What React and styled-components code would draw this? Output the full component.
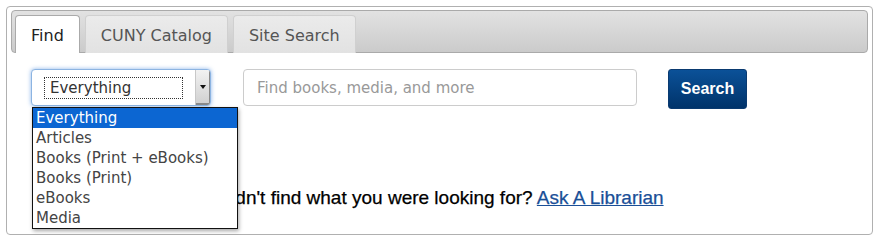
import React from 'react'
import styled, { createGlobalStyle } from 'styled-components'

const GlobalStyle = createGlobalStyle`
  body {
    margin: 0;
    background: #ffffff;
    font-family: "DejaVu Sans", Verdana, sans-serif;
  }
`

const Page = styled.div`
  padding: 6px 12px 0 6px;
`

const Panel = styled.div`
  position: relative;
  height: 229px;
  box-sizing: border-box;
  border: 1px solid #b0b0b0;
  border-radius: 4px;
  padding: 3px 4px 0 4px;
`

const TabBar = styled.div`
  display: flex;
  gap: 5px;
  height: 43px;
  box-sizing: border-box;
  padding: 4px 3px 0 3px;
  border: 1px solid #aaaaaa;
  border-radius: 4px;
  background: linear-gradient(#e2e2e2, #cbcbcb);
`

const Tab = styled.div`
  display: flex;
  align-items: center;
  height: 38px;
  box-sizing: border-box;
  padding: 2px 15px 0 15px;
  border: 1px solid ${p => (p.$active ? '#aaaaaa' : '#d0d0d0')};
  border-bottom: none;
  border-radius: 4px 4px 0 0;
  background: ${p => (p.$active ? '#ffffff' : 'linear-gradient(#ebebeb, #e2e2e2)')};
  color: ${p => (p.$active ? '#222222' : '#555555')};
  font-size: 16px;
`

const Content = styled.div`
  padding: 16px 0 0 20px;
`

const SearchRow = styled.div`
  display: flex;
  align-items: flex-start;
`

const SelectBox = styled.div`
  display: flex;
  width: 180px;
  height: 37px;
  box-sizing: border-box;
  border: 1px solid #8cb4e2;
  border-radius: 4px;
  box-shadow: 0 0 4px rgba(90, 150, 225, 0.7);
  background: #ffffff;
  overflow: hidden;
`

const SelectValue = styled.div`
  flex: 1;
  display: flex;
  align-items: center;
  padding-left: 12px;
`

const FocusRing = styled.span`
  display: inline-block;
  width: 139px;
  box-sizing: border-box;
  padding: 1px 4px 0 5px;
  border: 1px dotted #333333;
  font-size: 15px;
  color: #333333;
  line-height: 19px;
`

const ArrowButton = styled.div`
  width: 14px;
  display: flex;
  align-items: center;
  justify-content: center;
  background: linear-gradient(#f2f2f2, #cfcfcf);
  border-left: 1px solid #c8c8c8;
  box-shadow: inset -1px -2px 0 #8a8a8a;
`

const Arrow = styled.span`
  width: 0;
  height: 0;
  border-left: 3px solid transparent;
  border-right: 3px solid transparent;
  border-top: 4px solid #111111;
  margin-top: -1px;
`

const TextInput = styled.input`
  width: 394px;
  height: 37px;
  box-sizing: border-box;
  margin-left: 32px;
  padding: 0 13px;
  border: 1px solid #cccccc;
  border-radius: 4px;
  font-family: "DejaVu Sans", Verdana, sans-serif;
  font-size: 15px;
  color: #333333;
  outline: none;

  &::placeholder {
    color: #999999;
  }
`

const SearchButton = styled.button`
  width: 79px;
  height: 40px;
  margin-left: 31px;
  border: 1px solid #0a3a70;
  border-radius: 3px;
  background: linear-gradient(#0b5198, #00336a);
  color: #ffffff;
  font-family: "Liberation Sans", Arial, sans-serif;
  font-weight: bold;
  font-size: 16px;
  padding: 0;
`

const HelpLine = styled.p`
  margin: 78px 0 0 -18px;
  text-align: center;
  font-family: "Liberation Sans", Arial, sans-serif;
  font-size: 19px;
  line-height: 22px;
  color: #000000;
  -webkit-text-stroke: 0.25px #000000;
`

const HelpLink = styled.a`
  color: #1a4f97;
  text-decoration: underline;
  -webkit-text-stroke: 0.25px #1a4f97;
`

const Dropdown = styled.ul`
  position: absolute;
  left: 25px;
  top: 100px;
  width: 206px;
  box-sizing: border-box;
  margin: 0;
  padding: 0;
  list-style: none;
  background: #ffffff;
  border: 1px solid #111111;
  box-shadow: 1px 2px 4px rgba(0, 0, 0, 0.35);
  font-size: 15px;
`

const Option = styled.li`
  height: 20px;
  line-height: 20px;
  padding-left: 3px;
  background: ${p => (p.$selected ? '#0c66d2' : 'transparent')};
  color: ${p => (p.$selected ? '#ffffff' : '#444444')};
`

const options = [
  'Everything',
  'Articles',
  'Books (Print + eBooks)',
  'Books (Print)',
  'eBooks',
  'Media',
]

export default function App() {
  return (
    <>
      <GlobalStyle />
      <Page>
        <Panel>
          <TabBar>
            <Tab $active>Find</Tab>
            <Tab>CUNY Catalog</Tab>
            <Tab>Site Search</Tab>
          </TabBar>
          <Content>
            <SearchRow>
              <SelectBox>
                <SelectValue>
                  <FocusRing>Everything</FocusRing>
                </SelectValue>
                <ArrowButton>
                  <Arrow />
                </ArrowButton>
              </SelectBox>
              <TextInput placeholder="Find books, media, and more" />
              <SearchButton>Search</SearchButton>
            </SearchRow>
            <HelpLine>
              Didn't find what you were looking for?{' '}
              <HelpLink href="#">Ask A Librarian</HelpLink>
            </HelpLine>
          </Content>
          <Dropdown>
            {options.map((o, i) => (
              <Option key={o} $selected={i === 0}>
                {o}
              </Option>
            ))}
          </Dropdown>
        </Panel>
      </Page>
    </>
  )
}
